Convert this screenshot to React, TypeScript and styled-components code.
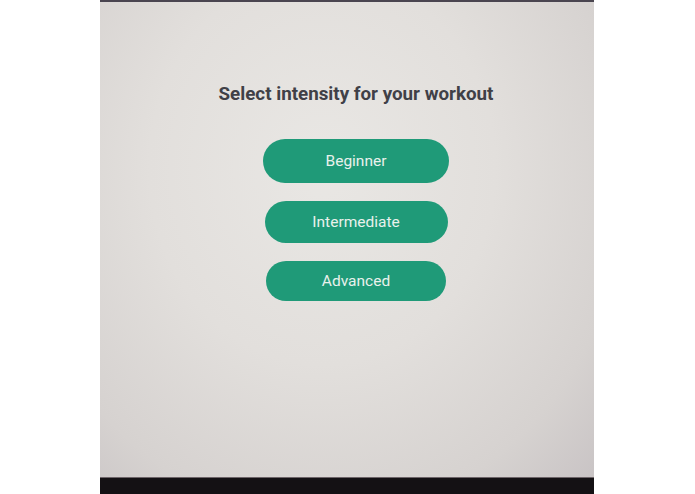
import React from "react";
import styled, { createGlobalStyle } from "styled-components";

const GlobalStyle = createGlobalStyle`
  html, body, #root {
    margin: 0;
    padding: 0;
    height: 100%;
  }
  body {
    background: #ffffff;
    font-family: Roboto, "Liberation Sans", Arial, sans-serif;
  }
`;

const Page = styled.div`
  height: 100vh;
  display: flex;
  justify-content: flex-start;
  padding-left: 100px;
  box-sizing: border-box;
`;

const Monitor = styled.div`
  width: 494px;
  height: 100%;
  display: flex;
  flex-direction: column;
`;

const TopEdge = styled.div`
  height: 2px;
  background: #4a4550;
`;

const Display = styled.div`
  flex: 1;
  background: radial-gradient(
    ellipse at 45% 35%,
    #e9e7e4 0%,
    #e2dfdc 45%,
    #d6d2d0 80%,
    #c9c4c5 100%
  );
  display: flex;
  flex-direction: column;
  align-items: center;
  padding: 81px 0 0 18px;
  box-sizing: border-box;
`;

const Bezel = styled.div`
  height: 16px;
  background: #141114;
  border-top: 1px solid #6d6468;
`;

const Title = styled.h1`
  margin: 0 0 34px;
  font-size: 18.8px;
  font-weight: 700;
  color: #404047;
`;

const Options = styled.div`
  display: flex;
  flex-direction: column;
  align-items: center;
  gap: 18px;
`;

const Choice = styled.button<{ $w: number; $h: number }>`
  width: ${(p) => p.$w}px;
  height: ${(p) => p.$h}px;
  border: none;
  border-radius: 22px;
  background: #1f9a78;
  color: #e9f1ec;
  font-family: Roboto, "Liberation Sans", Arial, sans-serif;
  font-size: 15.5px;
  font-weight: 400;
  cursor: pointer;
`;

const levels = [
  { label: "Beginner", w: 186, h: 44 },
  { label: "Intermediate", w: 183, h: 42 },
  { label: "Advanced", w: 180, h: 40 },
];

export default function App() {
  return (
    <>
      <GlobalStyle />
      <Page>
        <Monitor>
          <TopEdge />
          <Display>
            <Title>Select intensity for your workout</Title>
            <Options>
              {levels.map((l) => (
                <Choice key={l.label} $w={l.w} $h={l.h}>
                  {l.label}
                </Choice>
              ))}
            </Options>
          </Display>
          <Bezel />
        </Monitor>
      </Page>
    </>
  );
}
